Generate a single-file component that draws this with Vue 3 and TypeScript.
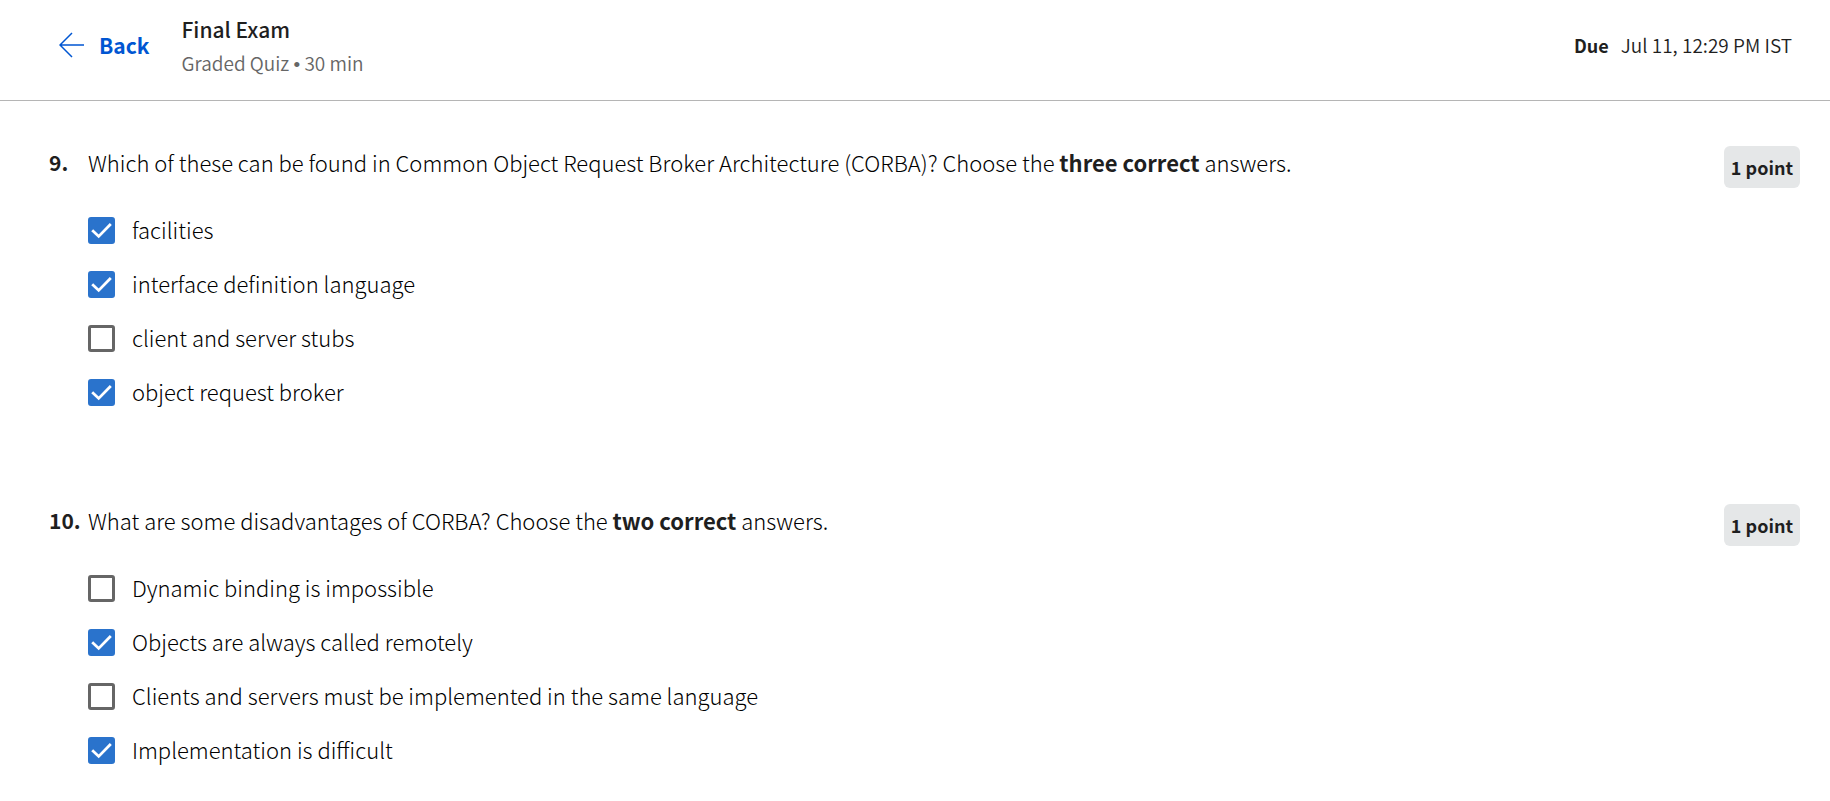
<script setup lang="ts">
import { reactive } from 'vue'

interface Choice {
  label: string
  checked: boolean
}

interface Question {
  number: number
  before: string
  emphasis: string
  after: string
  points: string
  choices: Choice[]
}

const questions = reactive<Question[]>([
  {
    number: 9,
    before: 'Which of these can be found in Common Object Request Broker Architecture (CORBA)? Choose the ',
    emphasis: 'three correct',
    after: ' answers.',
    points: '1 point',
    choices: [
      { label: 'facilities', checked: true },
      { label: 'interface definition language', checked: true },
      { label: 'client and server stubs', checked: false },
      { label: 'object request broker', checked: true },
    ],
  },
  {
    number: 10,
    before: 'What are some disadvantages of CORBA? Choose the ',
    emphasis: 'two correct',
    after: ' answers.',
    points: '1 point',
    choices: [
      { label: 'Dynamic binding is impossible', checked: false },
      { label: 'Objects are always called remotely', checked: true },
      { label: 'Clients and servers must be implemented in the same language', checked: false },
      { label: 'Implementation is difficult', checked: true },
    ],
  },
])
</script>

<template>
  <div class="page">
    <header class="bar">
      <button type="button" class="back">
        <svg class="arrow" viewBox="0 0 26 26" aria-hidden="true">
          <path d="M25 13H1.5M13 1L1 13l12 12" />
        </svg>
        <span>Back</span>
      </button>
      <div class="heading">
        <h1 class="title">Final Exam</h1>
        <p class="meta">Graded Quiz <span class="dot">•</span> 30 min</p>
      </div>
      <div class="due">
        <strong>Due</strong>
        <span>Jul 11, 12:29 PM IST</span>
      </div>
    </header>

    <main class="quiz">
      <section v-for="q in questions" :key="q.number" class="question">
        <span class="number">{{ q.number }}.</span>
        <fieldset class="body" :aria-labelledby="`prompt-${q.number}`">
          <p :id="`prompt-${q.number}`" class="prompt">{{ q.before }}<strong>{{ q.emphasis }}</strong>{{ q.after }}</p>
          <div class="choices">
            <label v-for="c in q.choices" :key="c.label" class="choice">
              <span class="tick">
                <input v-model="c.checked" type="checkbox" class="box" />
                <svg v-if="c.checked" class="check" viewBox="0 0 27 27" aria-hidden="true">
                  <path d="M4.2 13.2l6.5 6.2L22.8 7" />
                </svg>
              </span>
              <span class="label">{{ c.label }}</span>
            </label>
          </div>
        </fieldset>
        <span class="points">{{ q.points }}</span>
      </section>
    </main>
  </div>
</template>

<style>
body {
  margin: 0;
  background: #fff;
}
</style>

<style scoped>
.page {
  color: #1f1f1f;
  font-family: "Noto Sans CJK SC", "Noto Sans", sans-serif;
  font-size: 22px;
  font-weight: 350;
  line-height: 32px;
}

strong {
  color: #1f1f1f;
  font-weight: 700;
}

.bar {
  display: flex;
  align-items: flex-start;
  padding: 12px 38px 21px 59px;
  border-bottom: 1px solid #b5b5b5;
}

.back {
  display: flex;
  align-items: center;
  gap: 14px;
  margin: 16px 32px 0 0;
  padding: 0;
  border: 0;
  background: none;
  color: #0056d2;
  font: inherit;
  font-size: 21px;
  font-weight: 700;
  line-height: 34px;
  cursor: pointer;
}

.arrow {
  width: 26px;
  height: 26px;
  fill: none;
  stroke: currentColor;
  stroke-width: 1.5;
}

.heading {
  flex: 1;
}

.title {
  margin: 0;
  font-size: 21px;
  font-weight: 500;
  line-height: 34px;
}

.meta {
  margin: 0;
  color: #666;
  font-size: 19px;
  line-height: 33px;
}

.dot {
  font-family: "Liberation Sans", sans-serif;
  line-height: 1;
}

.due {
  display: flex;
  align-items: baseline;
  gap: 12px;
  margin-top: 16px;
  font-size: 19px;
  line-height: 34px;
}

.due strong {
  font-size: 18px;
}

.quiz {
  display: flex;
  flex-direction: column;
  gap: 95px;
  padding: 45px 30px 24px 49px;
}

.question {
  display: flex;
  align-items: flex-start;
}

.number {
  width: 39px;
  flex: none;
  font-size: 21px;
  font-weight: 700;
}

.body {
  flex: 1;
  min-width: 0;
  margin: 0;
  padding: 0;
  border: 0;
  color: #000;
  font-weight: 300;
}

.prompt {
  margin: 0;
}

.choices {
  display: flex;
  flex-direction: column;
  gap: 20px;
  margin-top: 35px;
}

.choice {
  display: flex;
  align-items: center;
  gap: 17px;
  cursor: pointer;
}

.label {
  padding-bottom: 2px;
}

.tick {
  position: relative;
  flex: none;
  width: 27px;
  height: 27px;
}

.box {
  appearance: none;
  display: block;
  box-sizing: border-box;
  width: 27px;
  height: 27px;
  margin: 0;
  border: 3px solid #666;
  border-radius: 3px;
  background: #fff;
}

.box:checked {
  border-color: #2a73cc;
  background: #2a73cc;
}

.check {
  position: absolute;
  inset: 0;
  fill: none;
  stroke: #fff;
  stroke-width: 2.8;
  pointer-events: none;
}

.points {
  flex: none;
  padding: 0 7px;
  border-radius: 6px;
  background: #e5e7e8;
  font-size: 18px;
  font-weight: 700;
  line-height: 42px;
}
</style>
